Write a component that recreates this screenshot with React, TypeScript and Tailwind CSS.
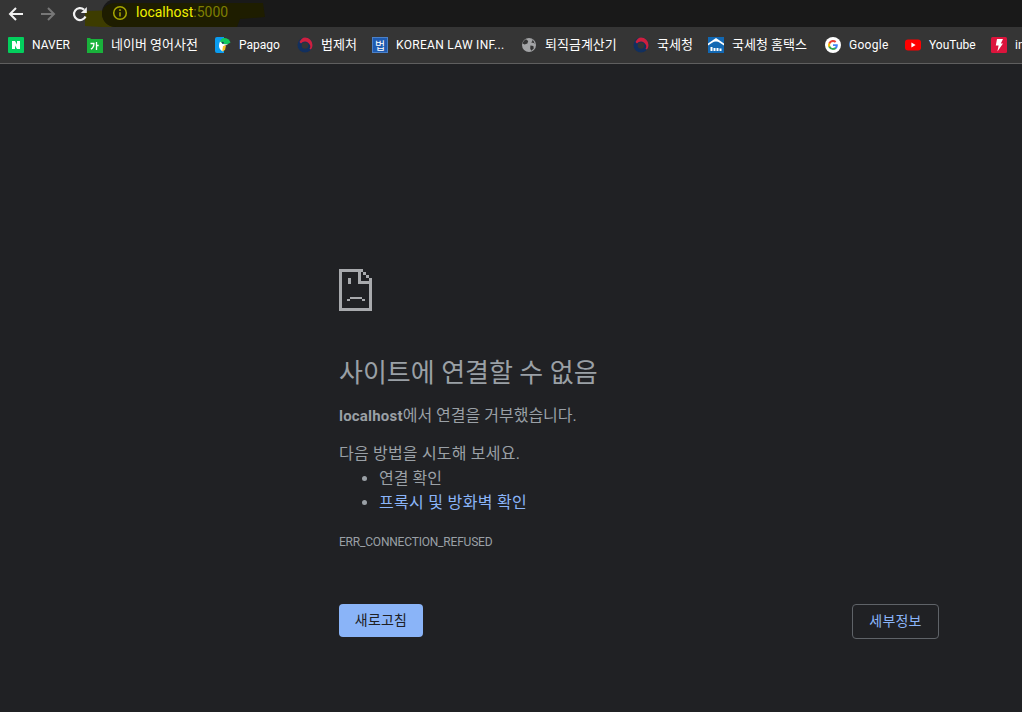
import React from "react";

const font = "font-['Roboto','Noto_Sans_CJK_KR',sans-serif]";

function Naver() {
  return (
    <svg width="16" height="16" viewBox="0 0 16 16">
      <rect width="16" height="16" rx="1" fill="#03cf5d" />
      <path d="M4 4h3l2 3.400V4h3v8H9L7 8.600V12H4z" fill="#fff" />
    </svg>
  );
}
function Ka() {
  return (
    <svg width="16" height="16" viewBox="0 0 16 16">
      <path d="M0 1h3l1 1h12v14H0z" fill="#19b23b" />
      <path d="M3.500 6.500h3.400c0 2.600-1 4.600-3 5.600M9.500 5v8M9.500 8.500h2.200" stroke="#fff" strokeWidth="1.300" fill="none" />
    </svg>
  );
}
function Papago() {
  return (
    <svg width="16" height="16" viewBox="0 0 16 16">
      <path d="M0 2a2 2 0 0 1 2-2h7v16H2a2 2 0 0 1-2-2z" fill="#0a9cf0" />
      <path d="M9 1c3.300 0 5.800 2 6.500 4.500L12 7.500 6 6.500 5 4.500C5.800 2.400 7 1 9 1z" fill="#11c95e" />
      <path d="M5 4.500 8 7l5 .5-4 1.500-1 5.500c-2.400-1-4-3-4-5.500 0-1.800.4-3.200 1-4.500z" fill="#fff" />
      <path d="M8 9l3-.6-1 4.600-2.800 1.400z" fill="#f7c325" />
      <circle cx="7.800" cy="5.800" r="1" fill="#173a5e" />
    </svg>
  );
}
function Gov() {
  return (
    <svg width="16" height="16" viewBox="0 0 16 16">
      <circle cx="8" cy="8" r="7.500" fill="#12305f" />
      <path d="M8 .5a7.500 7.500 0 0 1 7.500 7.500c0 1.700-.6 3.300-1.600 4.500l-1.400-.7c.7-.9 1-2.300.6-3.600C12 6 10 4.500 8 4.500 6.500 4.500 5 5.200 4 6.500L2.500 5C3.800 2.300 5.700.5 8 .5z" fill="#cf1f3e" />
      <circle cx="8" cy="8.500" r="3.300" fill="#353535" />
    </svg>
  );
}
function Beop() {
  return (
    <div className="w-4 h-4 bg-[#1f5bb0] border border-[#4a80c8] flex items-center justify-center text-white text-[11px] leading-none font-['Noto_Sans_CJK_KR',sans-serif]">
      법
    </div>
  );
}
function Globe() {
  return (
    <svg width="16" height="16" viewBox="0 0 16 16">
      <circle cx="8" cy="8" r="7" fill="#a3a4a6" />
      <path d="M5 2.200 7.200 4 6.400 6.400 3.600 7.600 1.600 6.400C2 4.600 3.300 3 5 2.200zM9.400 8.400l3 .6.400 2.600-2.600 2.200-1-2.200zM10.600 2l1 1.800-1.400 1.600 2.600.6 1 1.200A7 7 0 0 0 10.600 2z" fill="#353535" />
    </svg>
  );
}
function Hometax() {
  return (
    <svg width="16" height="16" viewBox="0 0 16 16">
      <rect width="16" height="16" fill="#1268b3" />
      <path d="M0 6.500 8 1l8 5.500v2C12.500 6.500 11 4.500 8 4.500S3.500 6.500 0 8.500z" fill="#fff" />
      <rect x="2.500" y="10" width="2" height="4" fill="#fff" />
      <rect x="5.500" y="11" width="2" height="3" fill="#fff" />
      <rect x="8.500" y="11" width="2" height="3" fill="#fff" />
      <rect x="11.500" y="11.500" width="2" height="2.500" fill="#fff" />
    </svg>
  );
}
function Google() {
  return (
    <svg width="16" height="16" viewBox="0 0 16 16">
      <circle cx="8" cy="8" r="8" fill="#fff" />
      <path d="M12.800 8.150c0-.35-.03-.7-.09-1H8v1.900h2.700a2.300 2.300 0 0 1-1 1.500v1.250h1.620c.95-.87 1.480-2.150 1.480-3.650z" fill="#4285f4" />
      <path d="M8 13c1.350 0 2.480-.45 3.320-1.200L9.700 10.550c-.45.300-1.020.480-1.700.480-1.300 0-2.400-.88-2.800-2.060H3.530v1.290A5 5 0 0 0 8 13z" fill="#34a853" />
      <path d="M5.200 8.970a3 3 0 0 1 0-1.940V5.740H3.530a5 5 0 0 0 0 4.520z" fill="#fbbc05" />
      <path d="M8 4.980c.74 0 1.400.25 1.920.75l1.430-1.440A5 5 0 0 0 3.530 5.740L5.200 7.030C5.600 5.850 6.700 4.980 8 4.980z" fill="#ea4335" />
    </svg>
  );
}
function YouTube() {
  return (
    <svg width="16" height="16" viewBox="0 0 16 16">
      <rect x="0" y="2.500" width="16" height="11" rx="3" fill="#f00" />
      <path d="M6.400 5.600 10.600 8l-4.200 2.400z" fill="#fff" />
    </svg>
  );
}
function Bolt() {
  return (
    <svg width="16" height="16" viewBox="0 0 16 16">
      <rect width="16" height="16" rx="1.500" fill="#dc143c" />
      <path d="M6 2h6L9.800 6.500H12L6.400 14.500 7.600 8.500H4.800z" fill="#fff" />
    </svg>
  );
}

const bookmarks: [React.ReactNode, string, string, string][] = [
  [<Naver />, "NAVER", "w-[79px]", "text-[12px]"],
  [<Ka />, "네이버 영어사전", "w-[128px]", "text-[13px]"],
  [<Papago />, "Papago", "w-[82px]", "text-[12px]"],
  [<Gov />, "법제처", "w-[75px]", "text-[13px]"],
  [<Beop />, "KOREAN LAW INF...", "w-[149px]", "text-[12px] tracking-[0.3px]"],
  [<Globe />, "퇴직금계산기", "w-[112px]", "text-[13px]"],
  [<Gov />, "국세청", "w-[75px]", "text-[13px]"],
  [<Hometax />, "국세청 홈택스", "w-[117px]", "text-[13px]"],
  [<Google />, "Google", "w-[80px]", "text-[12px] tracking-[0.3px]"],
  [<YouTube />, "YouTube", "w-[86px]", "text-[12px]"],
  [<Bolt />, "in", "w-[31px]", "text-[12px]"],
];

export default function App() {
  return (
    <div className={`w-[1022px] h-[712px] overflow-hidden flex flex-col bg-[#202124] ${font}`}>
      <div className="relative h-[27px] bg-[#353535] flex items-center pl-[8px] shrink-0 overflow-hidden">
        <svg width="16" height="16" viewBox="0 0 16 16" fill="none" stroke="#f2f2f2" strokeWidth="2">
          <path d="M15 8H2M8 2 2 8l6 6" />
        </svg>
        <svg className="ml-[16px]" width="16" height="16" viewBox="0 0 16 16" fill="none" stroke="#777" strokeWidth="2">
          <path d="M1 8h13M8 2l6 6-6 6" />
        </svg>
        <svg className="ml-[16px] relative z-10" width="16" height="16" viewBox="0 0 16 16" fill="none" stroke="#f2f2f2" strokeWidth="2.200">
          <path d="M13.500 10.500A6 6 0 1 1 12 3.600" />
          <path d="M14.800 1v6h-6z" fill="#f2f2f2" stroke="none" />
        </svg>
        <svg className="absolute left-[84px] top-0" width="60" height="27" viewBox="0 0 60 27">
          <path d="M1 11 40 10V27H18L1 26z" fill="#3d3c00" />
        </svg>
        <div className="absolute left-[102px] -top-[1px] w-[960px] h-[28px] bg-[#191919] rounded-[14px]" />
        <svg className="absolute left-[102px] top-0" width="166" height="27" viewBox="0 0 166 27">
          <path d="M0 14C0 7 6 3 14 3H161L163 17 138 19 135 27H14C6 27 0 21 0 14z" fill="#1e1d00" />
        </svg>
        <div className="absolute left-[112px] top-[4px] flex items-center h-[17px]">
          <svg width="16" height="16" viewBox="0 0 16 16" fill="none" stroke="#a8a800" strokeWidth="1.500">
            <circle cx="8" cy="8" r="6.300" />
            <path d="M8 7.200v4.200M8 4.200v1.700" />
          </svg>
          <span className="ml-[8px] text-[14px] text-[#f2f200]">localhost</span>
          <span className="text-[14px] text-[#7f7f00]">:5000</span>
        </div>
      </div>
      <div className="h-[37px] bg-[#353535] border-b border-[#5f5f5f] flex items-center pl-[8px] shrink-0 overflow-hidden">
        {bookmarks.map(([icon, label, w, size], i) => (
          <div key={i} className={`${w} shrink-0 flex items-center gap-[8px]`}>
            <span className="w-4 h-4 shrink-0 flex">{icon}</span>
            <span className={`${size} text-white whitespace-nowrap`}>{label}</span>
          </div>
        ))}
      </div>
      <main className="flex-1 ml-[339px] pt-[205px] w-[600px]">
        <svg className="block" width="33" height="42" viewBox="0 0 33 42" fill="#a8aaad" shapeRendering="crispEdges">
          <path fillRule="evenodd" d="M0 0h24v3h3v3h3v3h3v33H0zM3 3v36h27V15H19V3zM22 3v9h8V9h-3V6h-3V3z" />
          <rect x="9" y="9" width="3" height="6" />
          <rect x="11" y="28" width="12" height="2" />
          <rect x="8" y="30" width="3" height="2" />
          <rect x="23" y="30" width="3" height="2" />
        </svg>
        <h1 className="mt-[45px] text-[26px] leading-[34px] font-normal text-[#9aa0a6]">사이트에 연결할 수 없음</h1>
        <p className="mt-[16px] text-[16px] leading-[20px] text-[#9aa0a6]">
          <b className="font-bold text-[15px] tracking-[0.2px]">localhost</b>에서 연결을 거부했습니다.
        </p>
        <p className="mt-[18px] text-[16px] tracking-[0.2px] leading-[20px] text-[#9aa0a6]">다음 방법을 시도해 보세요.</p>
        <ul className="mt-[3px] pl-[40px] list-disc text-[16px] leading-[24px] text-[#9aa0a6]">
          <li>연결 확인</li>
          <li><span className="text-[#8ab4f8] tracking-[0.3px]">프록시 및 방화벽 확인</span></li>
        </ul>
        <div className="mt-[19px] text-[12px] tracking-[-0.2px] leading-[16px] text-[#9aa0a6]">ERR_CONNECTION_REFUSED</div>
        <div className="mt-[54px] flex justify-between items-start">
          <button className="w-[84px] h-[33px] rounded-[4px] bg-[#8ab4f8] text-[#202124] text-[14px] tracking-[0.2px]">새로고침</button>
          <button className="w-[87px] h-[35px] rounded-[4px] border border-[#5f6368] text-[#8ab4f8] text-[14px] tracking-[0.2px]">세부정보</button>
        </div>
      </main>
    </div>
  );
}
